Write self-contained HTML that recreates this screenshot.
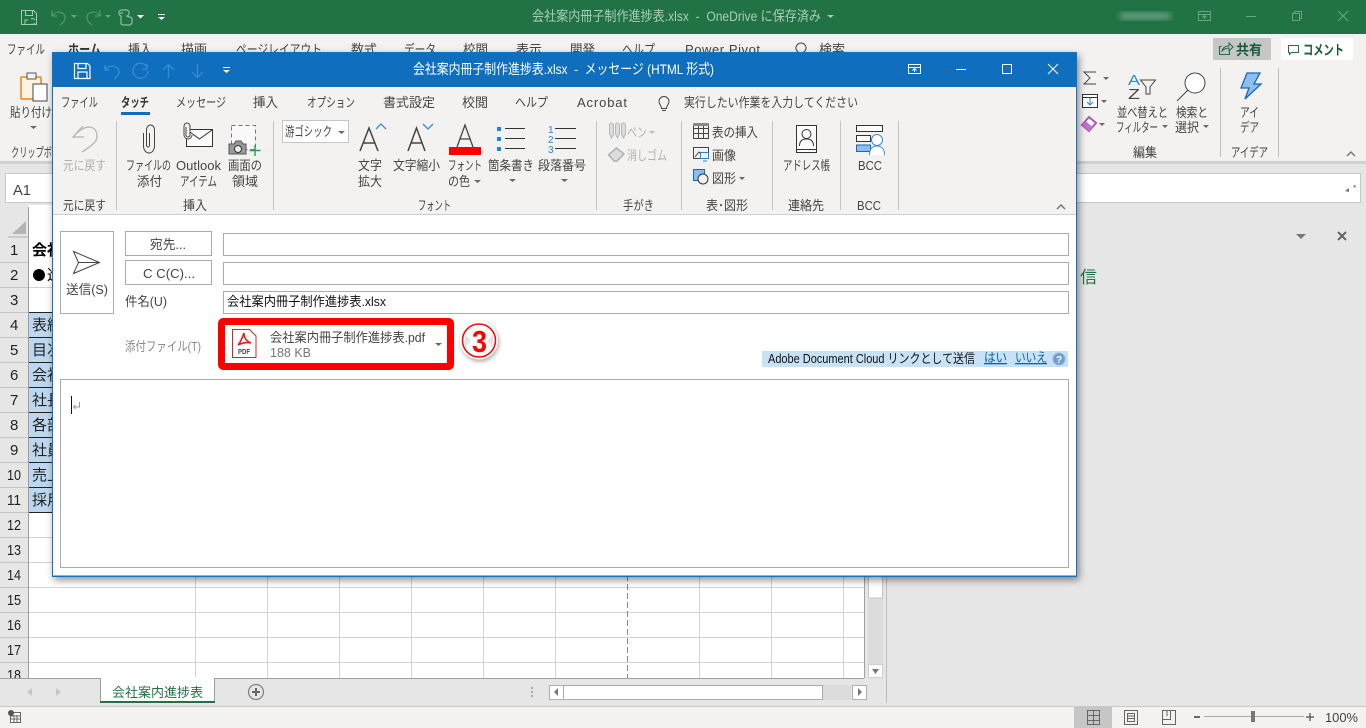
<!DOCTYPE html>
<html lang="ja"><head><meta charset="utf-8"><title>会社案内冊子制作進捗表</title>
<style>
html,body{margin:0;padding:0;width:1366px;height:728px;overflow:hidden;background:#e6e6e6}
svg{display:block}
text{font-family:"Liberation Sans","Noto Sans CJK JP",sans-serif;font-size:13px;fill:#444;white-space:pre}
.g{fill:#b0b0b0}.d{fill:#333}.n{font-size:15px;fill:#222}.c{font-size:15px;fill:#222}
.i{fill:none;stroke:#444;stroke-width:1}
</style></head><body>
<svg width="1366" height="728" viewBox="0 0 1366 728" xmlns="http://www.w3.org/2000/svg">
<defs>
<filter id="sh" x="-5%" y="-5%" width="110%" height="110%"><feDropShadow dx="2" dy="3" stdDeviation="4" flood-color="#000" flood-opacity=".45"/></filter>
<filter id="bl"><feGaussianBlur stdDeviation="3"/></filter>
<filter id="s2" x="-30%" y="-30%" width="160%" height="160%"><feDropShadow dx="1" dy="2" stdDeviation="2" flood-color="#000" flood-opacity=".35"/></filter>
</defs>
<!-- Excel chrome -->
<rect width="1366" height="728" fill="#e6e6e6"/>
<rect width="1366" height="34" fill="#217346"/>
<rect y="34" width="1366" height="127" fill="#f3f2f1"/>
<rect y="161" width="1366" height="3" fill="#d0d0d0"/>
<g fill="none" stroke="#a9c9b7" stroke-width="1">
<path d="M21.500 10.500h12l3 3v11h-15zM25.500 10.500v5h7v-5M25 24v-4h3M31 19a3 3 0 0 1 4 1M35 23a3 3 0 0 1-4 1"/>
<path d="M52 10v6h5M52 16c4-6 13-5 13 2 0 3-2 5-5 7" stroke="#5f9a7b"/>
<path d="M100 10v6h-5M100 16c-4-6-13-5-13 2 0 3 2 5 5 7" stroke="#5f9a7b"/>
<path d="M121 24v-8a2 2 0 0 1 2-6h2a2 2 0 0 1 2 6l5 2v5l-2 2h-7zM120 13h3"/>
</g>
<path d="M71 15h6l-3 3z" fill="#6ba386"/><path d="M105 15h6l-3 3z" fill="#6ba386"/>
<path d="M137 15h7l-3.500 3.500z" fill="#fff"/><path d="M158 14h7v1h-7zM158 17h7l-3.500 3z" fill="#fff"/>
<text x="532" y="21" textLength="289" lengthAdjust="spacingAndGlyphs" style="fill:#a9cbb8;font-size:14px">会社案内冊子制作進捗表.xlsx  -  OneDrive に保存済み</text>
<path d="M827 15h7l-3.500 3z" fill="#a9cbb8"/>
<rect x="1120" y="12" width="50" height="8" fill="#5f9a7b" filter="url(#bl)"/>
<g fill="none" stroke="#6ba386"><path d="M1198.500 11.500h12v9h-12zM1198.500 14.500h12M1204.500 19v-3M1202.500 17.500l2-2 2 2"/><path d="M1246 16.500h10"/><path d="M1292.500 13.500h7v7h-7zM1294.500 13.500v-2h7v7h-2"/><path d="M1338 11l10 10M1348 11l-10 10"/></g>
<text x="7" y="54" textLength="38" lengthAdjust="spacingAndGlyphs">ファイル</text>
<text x="68" y="54" textLength="33" lengthAdjust="spacingAndGlyphs" font-weight="700" class="d">ホーム</text>
<text x="128" y="54" textLength="24" lengthAdjust="spacingAndGlyphs">挿入</text>
<text x="181" y="54" textLength="26" lengthAdjust="spacingAndGlyphs">描画</text>
<text x="236" y="54" textLength="86" lengthAdjust="spacingAndGlyphs">ページレイアウト</text>
<text x="351" y="54" textLength="26" lengthAdjust="spacingAndGlyphs">数式</text>
<text x="404" y="54" textLength="32" lengthAdjust="spacingAndGlyphs">データ</text>
<text x="463" y="54" textLength="25" lengthAdjust="spacingAndGlyphs">校閲</text>
<text x="516" y="54" textLength="26" lengthAdjust="spacingAndGlyphs">表示</text>
<text x="570" y="54" textLength="25" lengthAdjust="spacingAndGlyphs">開発</text>
<text x="622" y="54" textLength="33" lengthAdjust="spacingAndGlyphs">ヘルプ</text>
<text x="685" y="54" textLength="75">Power Pivot</text>
<text x="819" y="54" textLength="26" lengthAdjust="spacingAndGlyphs">検索</text>
<circle cx="801" cy="48" r="5" class="i"/>
<!-- Share / comment -->
<rect x="1213" y="38" width="58" height="22" rx="1" fill="#c6c6c6"/>
<path d="M1221.500 46.500h-2v8h10v-3M1222 51c1-4 4-5 7-5v-3l4 4-4 4v-3c-3 0-5 1-7 3z" fill="none" stroke="#1e6b41"/>
<text x="1236" y="55" textLength="26" lengthAdjust="spacingAndGlyphs" font-weight="700" style="fill:#185c37;font-size:14px">共有</text>
<rect x="1281" y="38" width="72" height="22" rx="1" fill="#fff"/>
<path d="M1288.500 45.500h10v7h-7l-2 2v-2h-1z" fill="none" stroke="#217346"/>
<text x="1303" y="55" textLength="41" lengthAdjust="spacingAndGlyphs" font-weight="700" style="fill:#185c37;font-size:14px">コメント</text>
<!-- Excel ribbon left -->
<rect x="21" y="77" width="20" height="22" rx="1" fill="#fdf3e3" stroke="#f0a040" stroke-width="2"/>
<rect x="27" y="73" width="9" height="6" fill="#f3f2f1" stroke="#555"/>
<rect x="33" y="84" width="14" height="17" fill="#fff" stroke="#444"/>
<text x="10" y="117" textLength="42" lengthAdjust="spacingAndGlyphs">貼り付け</text>
<path d="M30 126h7l-3.500 3z" fill="#666"/>
<text x="11" y="157" textLength="41" lengthAdjust="spacingAndGlyphs">クリップボ</text>
<!-- Excel ribbon right -->
<path d="M1096 72h-12l6 6-6 6h12" fill="none" stroke="#444"/>
<path d="M1103 77h6l-3 3z" fill="#666"/>
<rect x="1082.500" y="94.500" width="15" height="13" fill="#fff" stroke="#333"/><path d="M1083 97.500h14" stroke="#333"/><path d="M1090 98v7M1087 102l3 3 3-3" fill="none" stroke="#1e88d8"/>
<path d="M1101 100h6l-3 3z" fill="#666"/>
<path d="M1082 125l7-8 7 6-7 8z" fill="#fff" stroke="#b352c0" stroke-width="2"/><path d="M1082 125l3.500-4 7 6-3.500 4z" fill="#c070cc"/>
<path d="M1099 123h6l-3 3z" fill="#666"/>
<text x="1128" y="85" textLength="12" lengthAdjust="spacingAndGlyphs" style="fill:#2a8fdc;font-size:15px">A</text>
<text x="1128" y="99" textLength="12" lengthAdjust="spacingAndGlyphs" style="fill:#444;font-size:15px">Z</text>
<path d="M1140.500 80h15l-5.500 7v7h-4v-7z" fill="none" stroke="#444"/>
<circle cx="1195" cy="83" r="10" fill="#fff" stroke="#444"/><path d="M1188 90l-11 11" stroke="#444"/>
<text x="1117" y="117" textLength="51" lengthAdjust="spacingAndGlyphs">並べ替えと</text>
<text x="1116" y="132" textLength="42" lengthAdjust="spacingAndGlyphs">フィルター</text>
<path d="M1162 125h6l-3 3z" fill="#666"/>
<text x="1176" y="117" textLength="32" lengthAdjust="spacingAndGlyphs">検索と</text>
<text x="1175" y="132" textLength="24" lengthAdjust="spacingAndGlyphs">選択</text>
<path d="M1203 125h6l-3 3z" fill="#666"/>
<text x="1133" y="157" textLength="24" lengthAdjust="spacingAndGlyphs">編集</text>
<rect x="1220" y="68" width="1" height="89" fill="#bdbdbd"/><rect x="1278" y="68" width="1" height="89" fill="#bdbdbd"/>
<path d="M1247 73h13l-6 11h7l-16 15 4-11h-8z" fill="#8dbdec" stroke="#1469b8" stroke-width="1.300"/>
<text x="1240" y="117" textLength="19" lengthAdjust="spacingAndGlyphs">アイ</text>
<text x="1240" y="132" textLength="19" lengthAdjust="spacingAndGlyphs">デア</text>
<text x="1231" y="157" textLength="37" lengthAdjust="spacingAndGlyphs">アイデア</text>
<path d="M1347 156l4-4 4 4" fill="none" stroke="#777" stroke-width="1.500"/>
<!-- Formula bar -->
<rect x="5.500" y="173.500" width="1355" height="29" fill="#fff" stroke="#c8c8c8"/>
<text x="13" y="195" textLength="18" lengthAdjust="spacingAndGlyphs" style="font-size:15px">A1</text>
<path d="M1345 191l4-3v4zM1356 185l-3 1 2 2z" fill="#777"/>
<!-- Grid -->
<rect x="0" y="205" width="886" height="473" fill="#fff"/>
<rect x="0" y="205" width="28" height="473" fill="#e6e6e6"/>
<path d="M26 221v13h-14z" fill="#b4b4b4"/>
<path d="M8 237h20" stroke="#b0b0b0"/>
<g fill="#bdd7ee"><rect x="29" y="312" width="30" height="200"/></g>
<g stroke="#d4d4d4" stroke-width="1">
<path d="M29 287.500h30M29 512.500h838M29 537.500h838M29 562.500h838M29 587.500h838M29 612.500h838M29 637.500h838M29 662.500h838"/>
<path d="M195.500 512v166M267.500 512v166M339.500 512v166M411.500 512v166M483.500 512v166M555.500 512v166M699.500 512v166M771.500 512v166M843.500 512v166"/>
</g>
<path d="M627.500 512v166" stroke="#888" stroke-dasharray="6 3"/>
<path d="M29 312.500h30M29 337.500h30M29 362.500h30M29 387.500h30M29 412.500h30M29 437.500h30M29 462.500h30M29 487.500h30M29 512.500h30" stroke="#222"/>
<path d="M0 262.500h28M0 287.500h28M0 312.500h28M0 337.500h28M0 362.500h28M0 387.500h28M0 412.500h28M0 437.500h28M0 462.500h28M0 487.500h28M0 512.500h28M0 537.500h28M0 562.500h28M0 587.500h28M0 612.500h28M0 637.500h28M0 662.500h28" stroke="#c4c4c4"/>
<rect x="28" y="207" width="1" height="471" fill="#9e9e9e"/>
<g class="n">
<text class="n" x="10" y="255">1</text><text class="n" x="10" y="280">2</text><text class="n" x="10" y="305">3</text><text class="n" x="10" y="330">4</text><text class="n" x="10" y="355">5</text><text class="n" x="10" y="380">6</text><text class="n" x="10" y="405">7</text><text class="n" x="10" y="430">8</text><text class="n" x="10" y="455">9</text>
<text class="n" x="7" y="480" textLength="14" lengthAdjust="spacingAndGlyphs">10</text><text class="n" x="7" y="505" textLength="14" lengthAdjust="spacingAndGlyphs">11</text><text class="n" x="7" y="530" textLength="14" lengthAdjust="spacingAndGlyphs">12</text><text class="n" x="7" y="555" textLength="14" lengthAdjust="spacingAndGlyphs">13</text><text class="n" x="7" y="580" textLength="14" lengthAdjust="spacingAndGlyphs">14</text><text class="n" x="7" y="605" textLength="14" lengthAdjust="spacingAndGlyphs">15</text><text class="n" x="7" y="630" textLength="14" lengthAdjust="spacingAndGlyphs">16</text><text class="n" x="7" y="655" textLength="14" lengthAdjust="spacingAndGlyphs">17</text><text class="n" x="7" y="680" textLength="14" lengthAdjust="spacingAndGlyphs">18</text>
</g>
<text class="c" x="32" y="255" font-weight="700" style="fill:#000">会社</text>
<circle cx="39" cy="275" r="6" fill="#000"/>
<text class="c" x="47" y="280" style="fill:#000">進</text>
<text class="c" x="32" y="330">表紙</text><text class="c" x="32" y="355">目次</text><text class="c" x="32" y="380">会社</text><text class="c" x="32" y="405">社長</text><text class="c" x="32" y="430">各部</text><text class="c" x="32" y="455">社員</text><text class="c" x="32" y="480">売上</text><text class="c" x="32" y="505">採用</text>
<!-- Scrollbars -->
<rect x="864" y="207" width="22" height="471" fill="#e6e6e6"/><rect x="864" y="512" width="1" height="166" fill="#a0a0a0"/>
<rect x="868" y="560" width="15" height="118" fill="#dcdcdc"/>
<rect x="868.500" y="570" width="14" height="28" fill="#fff" stroke="#c4c4c4"/>
<rect x="868.500" y="664.500" width="14" height="13" fill="#fff" stroke="#d0d0d0"/><path d="M872 669h7l-3.500 5z" fill="#777"/>
<rect x="886" y="205" width="1" height="498" fill="#bdbdbd"/>
<rect x="0" y="678" width="886" height="28" fill="#e6e6e6"/>
<rect x="0" y="678" width="864" height="1" fill="#a0a0a0"/>
<!-- Sheet tab -->
<path d="M100.500 678.500V702h114V678.500" fill="#fff" stroke="#a0a0a0"/><rect x="101" y="677" width="113" height="3" fill="#fff"/>
<rect x="100" y="701" width="115" height="2" fill="#217346"/>
<text x="112" y="697" textLength="91" lengthAdjust="spacingAndGlyphs" style="fill:#217346;font-size:13px">会社案内進捗表</text>
<path d="M32 688v8l-5-4zM56 688v8l5-4z" fill="#c4c4c4"/>
<circle cx="256" cy="692" r="7.500" fill="none" stroke="#808080" stroke-width="1.200"/><path d="M252 692h8M256 688v8" stroke="#666" stroke-width="2"/>
<rect x="531" y="687" width="2" height="2" fill="#aaa"/><rect x="531" y="691" width="2" height="2" fill="#aaa"/><rect x="531" y="695" width="2" height="2" fill="#aaa"/>
<rect x="549" y="685" width="302" height="15" fill="#dcdcdc"/>
<rect x="549.500" y="685.500" width="14" height="14" fill="#fff" stroke="#b0b0b0"/><path d="M558 688v8l-4-4z" fill="#777"/>
<rect x="563.500" y="685.500" width="259" height="14" fill="#fff" stroke="#aaa"/>
<rect x="852.500" y="685.500" width="14" height="14" fill="#fff" stroke="#b0b0b0"/><path d="M858 688v8l4-4z" fill="#777"/>
<!-- Right pane -->
<path d="M1296 234h10l-5 5z" fill="#777"/>
<path d="M1338 232l8 8M1346 232l-8 8" stroke="#666" stroke-width="2"/>
<text x="1080" y="283" style="fill:#217346;font-size:17px">信</text>
<!-- Status bar -->
<rect x="0" y="706" width="1366" height="22" fill="#f3f2f1"/><rect x="0" y="706" width="1366" height="1" fill="#c8c8c8"/>
<path d="M10.500 712.500h10v10h-10z" fill="#fff" stroke="#666"/><path d="M10 716h11M10 719h11M14 715v8M17 715v8" stroke="#666"/>
<circle cx="11" cy="713" r="3" fill="#555"/>
<rect x="1074" y="707" width="38" height="21" fill="#c6c6c6"/>
<path d="M1087.500 710.500h12v14h-12zM1087.500 715.500h12M1087.500 720.500h12M1093.500 710v15" fill="none" stroke="#666"/>
<path d="M1124.500 710.500h13v14h-13z" fill="none" stroke="#666"/><path d="M1127.500 713.500h7v8h-7zM1128 716h6M1128 718.500h6" fill="none" stroke="#666"/>
<path d="M1162.500 710.500h13v14h-13zM1162.500 719.500h8v-9M1167 711v5" fill="none" stroke="#666"/>
<rect x="1194" y="716" width="6" height="2" fill="#666"/>
<rect x="1204" y="716" width="100" height="1" fill="#aaa"/>
<rect x="1251" y="711" width="4" height="11" fill="#777"/>
<path d="M1306 717h8M1310 713v8" stroke="#666" stroke-width="1.500"/>
<text x="1325" y="722" textLength="33" lengthAdjust="spacingAndGlyphs">100%</text>

<!-- Dialog -->
<rect x="52" y="52" width="1025" height="525" fill="#fff" filter="url(#sh)"/>
<rect x="52" y="52" width="1025" height="35" fill="#106ebe"/>
<rect x="53" y="87" width="1023" height="127" fill="#f3f2f1"/>
<rect x="53" y="214" width="1023" height="1" fill="#d2d0ce"/>
<rect x="52.500" y="52.500" width="1024" height="524" fill="none" stroke="#1272c4" stroke-width="1"/>
<rect x="53" y="575.500" width="1023" height="1" fill="#1272c4"/>
<!-- title bar icons -->
<g fill="none" stroke="#fff" stroke-width="1.200"><path d="M74.500 63.500h13l2.500 2.500v12.500h-15.500zM78 63.500v5h8v-5M78 78v-6h9v6"/></g>
<g fill="none" stroke="#3b8bd4" stroke-width="1.300">
<path d="M105 65v5h5M105 70c3-6 14-5 14 2 0 3-2 5-5 7"/>
<path d="M147 64v5h-5M147 67a7.500 7.500 0 1 0 1 4"/>
<path d="M168.500 78V65M163 70l5.500-5.500 5.500 5.500"/>
<path d="M197.500 64v13M192 72l5.500 5.500 5.500-5.500"/>
</g>
<path d="M223 67h7v1h-7zM223 70h7l-3.500 3z" fill="#fff"/>
<text x="413" y="74" textLength="301" lengthAdjust="spacingAndGlyphs" style="fill:#fff;font-size:14px">会社案内冊子制作進捗表.xlsx  -  メッセージ (HTML 形式)</text>
<g fill="none" stroke="#fff"><path d="M908.500 64.500h12v9h-12zM908.500 67.500h12M914.500 72v-3M912.500 70.500l2-2 2 2"/><path d="M956 69.500h10"/><path d="M1002.500 64.500h9v9h-9z"/><path d="M1048 64l10 10M1058 64l-10 10"/></g>
<!-- tabs -->
<text x="61" y="107" textLength="37" lengthAdjust="spacingAndGlyphs">ファイル</text>
<text x="121" y="107" textLength="28" lengthAdjust="spacingAndGlyphs" font-weight="700" class="d">タッチ</text>
<rect x="121" y="112" width="29" height="3" fill="#106ebe"/>
<text x="176" y="107" textLength="50" lengthAdjust="spacingAndGlyphs">メッセージ</text>
<text x="253" y="107" textLength="25" lengthAdjust="spacingAndGlyphs">挿入</text>
<text x="307" y="107" textLength="48" lengthAdjust="spacingAndGlyphs">オプション</text>
<text x="383" y="107" textLength="52" lengthAdjust="spacingAndGlyphs">書式設定</text>
<text x="462" y="107" textLength="26" lengthAdjust="spacingAndGlyphs">校閲</text>
<text x="515" y="107" textLength="33" lengthAdjust="spacingAndGlyphs">ヘルプ</text>
<text x="577" y="107" textLength="50">Acrobat</text>
<path d="M661.500 108.500c0-3-2.500-4-2.500-7a5 5 0 0 1 10 0c0 3-2.500 4-2.500 7zM662 110.500h4" fill="none" stroke="#444"/>
<text x="684" y="107" textLength="174" lengthAdjust="spacingAndGlyphs">実行したい作業を入力してください</text>
<!-- separators -->
<g fill="#c4c4c4"><rect x="116" y="121" width="1" height="89"/><rect x="273" y="121" width="1" height="89"/><rect x="596" y="121" width="1" height="89"/><rect x="681" y="121" width="1" height="89"/><rect x="772" y="121" width="1" height="89"/><rect x="840" y="121" width="1" height="89"/><rect x="898" y="121" width="1" height="89"/></g>
<!-- undo -->
<path d="M83 126l-10 11h11M77 133c8-8 20-9 20 4 0 5-7 10-15 15" fill="none" stroke="#b4b4b4" stroke-width="1.300"/>
<text x="63" y="170" textLength="43" lengthAdjust="spacingAndGlyphs" class="g">元に戻す</text>
<text x="63" y="210" textLength="43" lengthAdjust="spacingAndGlyphs">元に戻す</text>
<!-- attach -->
<path d="M143.500 133v13a5.500 7 0 0 0 11 0v-16a4 5 0 0 0-8 0v15a1.500 2 0 0 0 3 0v-12" fill="none" stroke="#444"/>
<text x="126" y="170" textLength="45" lengthAdjust="spacingAndGlyphs">ファイルの</text>
<text x="137" y="186" textLength="25" lengthAdjust="spacingAndGlyphs">添付</text>
<!-- outlook item -->
<path d="M186.500 129.500h26v17h-26z" fill="#fbfbfb" stroke="#333"/><path d="M187 130l12.500 9 12.500-9" fill="none" stroke="#333"/>
<path d="M186 127v8a2 2 0 0 0 4 0v-9a3 3 0 0 0-6 0v9a4 4 0 0 0 8 0" fill="#f3f2f1" stroke="#444"/>
<text x="176" y="170" textLength="45">Outlook</text>
<text x="180" y="186" textLength="37" lengthAdjust="spacingAndGlyphs">アイテム</text>
<!-- screenshot -->
<rect x="231.500" y="125.500" width="24" height="24" fill="#f9f9f9" stroke="#777" stroke-dasharray="4 3"/>
<path d="M229 144h5l2-3h5l2 3h3v10h-17z" fill="#999" stroke="#555"/><circle cx="238" cy="149" r="3.500" fill="#eee" stroke="#333"/>
<path d="M255 145v11M249.500 150.500h11" stroke="#1ea04c" stroke-width="1.400"/>
<text x="228" y="170" textLength="34" lengthAdjust="spacingAndGlyphs">画面の</text>
<text x="232" y="186" textLength="26" lengthAdjust="spacingAndGlyphs">領域</text>
<text x="183" y="210" textLength="24" lengthAdjust="spacingAndGlyphs">挿入</text>
<!-- font dropdown -->
<rect x="282.500" y="120.500" width="66" height="22" fill="#fff" stroke="#c8c6c4"/>
<text x="285" y="136" textLength="47" lengthAdjust="spacingAndGlyphs">游ゴシック</text>
<path d="M338 131h7l-3.500 3z" fill="#666"/>
<!-- A icons -->
<path d="M360 151l9-23 9 23M363 143h12" fill="none" stroke="#444" stroke-width="1.500"/>
<path d="M376 129l5-5 5 5" fill="none" stroke="#2a8fdc" stroke-width="1.300"/>
<text x="358" y="170" textLength="24" lengthAdjust="spacingAndGlyphs">文字</text>
<text x="358" y="186" textLength="24" lengthAdjust="spacingAndGlyphs">拡大</text>
<path d="M408 151l8.500-23 8.500 23M411 143h11" fill="none" stroke="#444" stroke-width="1.500"/>
<path d="M423 124l5 5 5-5" fill="none" stroke="#2a8fdc" stroke-width="1.300"/>
<text x="393" y="170" textLength="47" lengthAdjust="spacingAndGlyphs">文字縮小</text>
<path d="M457 147l8-22 8 22M460 139h10" fill="none" stroke="#444" stroke-width="1.300"/>
<rect x="449" y="147" width="32" height="8" fill="#f00"/>
<text x="448" y="170" textLength="34" lengthAdjust="spacingAndGlyphs">フォント</text>
<text x="448" y="186" textLength="22" lengthAdjust="spacingAndGlyphs">の色</text>
<path d="M474 180h7l-3.500 3z" fill="#666"/>
<!-- lists -->
<g fill="#1e88d8"><rect x="497" y="127" width="4" height="4"/><rect x="497" y="137" width="4" height="4"/><rect x="497" y="147" width="4" height="4"/></g>
<path d="M505 128.500h20M505 138.500h20M505 148.500h20" stroke="#333"/>
<text x="488" y="170" textLength="46" lengthAdjust="spacingAndGlyphs">箇条書き</text>
<path d="M509 179h7l-3.500 3z" fill="#666"/>
<text x="548" y="133" style="fill:#1e88d8;font-size:10px">1</text><text x="548" y="143" style="fill:#1e88d8;font-size:10px">2</text><text x="548" y="153" style="fill:#1e88d8;font-size:10px">3</text>
<path d="M555 128.500h21M555 138.500h21M555 148.500h21" stroke="#333"/>
<text x="538" y="170" textLength="48" lengthAdjust="spacingAndGlyphs">段落番号</text>
<path d="M561 179h7l-3.500 3z" fill="#666"/>
<text x="418" y="210" textLength="33" lengthAdjust="spacingAndGlyphs">フォント</text>
<!-- pen -->
<g fill="#dcdcdc" stroke="#b8b8b8"><path d="M609.500 125a2 2 0 0 1 4 0v9l-2 4-2-4zM615.500 125a2 2 0 0 1 4 0v9l-2 4-2-4zM621.500 125a2 2 0 0 1 4 0v9l-2 4-2-4z"/></g>
<text x="627" y="137" textLength="20" lengthAdjust="spacingAndGlyphs" class="g">ペン</text>
<path d="M649 131h6l-3 3z" fill="#bbb"/>
<path d="M608.500 155l8-7 7.500 6-7 7h-3z" fill="#ddd" stroke="#b0b0b0" stroke-width="1.500"/>
<text x="627" y="160" textLength="40" lengthAdjust="spacingAndGlyphs" class="g">消しゴム</text>
<text x="623" y="210" textLength="31" lengthAdjust="spacingAndGlyphs">手がき</text>
<!-- table/image/shape -->
<path d="M693.500 123.500h15v15h-15zM693.500 128.500h15M693.500 133.500h15M698.500 126v12M703.500 126v12" fill="none" stroke="#444"/><rect x="693" y="123" width="16" height="3" fill="#888"/>
<text x="712" y="137" textLength="46" lengthAdjust="spacingAndGlyphs">表の挿入</text>
<path d="M693.500 147.500h15v11h-15zM695 157l4-5 3 3" fill="none" stroke="#444"/><rect x="700.500" y="152.500" width="8" height="6" fill="#f3f2f1" stroke="#1e88d8"/><path d="M703 161h4" stroke="#1e88d8"/>
<text x="712" y="160" textLength="24" lengthAdjust="spacingAndGlyphs">画像</text>
<rect x="693.500" y="169.500" width="11" height="11" fill="#8dbdec" stroke="#1469b8"/><circle cx="703" cy="179" r="5" fill="#f3f2f1" stroke="#333"/>
<text x="712" y="183" textLength="24" lengthAdjust="spacingAndGlyphs">図形</text>
<path d="M739 177h6l-3 3z" fill="#666"/>
<text x="706" y="210" textLength="42" lengthAdjust="spacingAndGlyphs">表･図形</text>
<!-- address -->
<path d="M796.500 125.500h20v27h-20zM796.500 149.500h20" fill="#fbfbfb" stroke="#333"/>
<circle cx="806.500" cy="134" r="4.500" fill="none" stroke="#333"/><path d="M799.500 146c0-5 3-7 7-7s7 2 7 7" fill="none" stroke="#333"/>
<text x="783" y="170" textLength="47" lengthAdjust="spacingAndGlyphs">アドレス帳</text>
<text x="788" y="210" textLength="36" lengthAdjust="spacingAndGlyphs">連絡先</text>
<!-- bcc -->
<rect x="856.500" y="125.500" width="26" height="6" fill="#fff" stroke="#333"/>
<rect x="856.500" y="135.500" width="14" height="6" fill="#fff" stroke="#333"/>
<rect x="856.500" y="145" width="14" height="6.500" fill="#8dbdec" stroke="#1469b8"/>
<circle cx="877" cy="140" r="5.500" fill="#fff" stroke="#2a8fdc"/><path d="M869.500 155c0-6 3-9 7.500-9s7.500 3 7.500 9" fill="#fff" stroke="#2a8fdc"/>
<text x="858" y="170" textLength="24" lengthAdjust="spacingAndGlyphs">BCC</text>
<text x="857" y="210" textLength="24" lengthAdjust="spacingAndGlyphs">BCC</text>
<path d="M1057 209l4-4 4 4" fill="none" stroke="#777" stroke-width="1.500"/>
<!-- compose -->
<rect x="60.500" y="231.500" width="53" height="82" fill="#fff" stroke="#ababab"/>
<path d="M73.500 251.500l26 11-26 11 5-11z" fill="none" stroke="#444"/><path d="M78.500 262.500h21" stroke="#444"/>
<text x="66" y="294" textLength="42" lengthAdjust="spacingAndGlyphs">送信(S)</text>
<rect x="125.500" y="231.500" width="86" height="24" fill="#fff" stroke="#ababab"/>
<text x="150" y="249" textLength="36" lengthAdjust="spacingAndGlyphs">宛先...</text>
<rect x="125.500" y="260.500" width="86" height="24" fill="#fff" stroke="#ababab"/>
<text x="143" y="278" textLength="52" lengthAdjust="spacingAndGlyphs">C C(C)...</text>
<rect x="223.500" y="233.500" width="845" height="22" fill="#fff" stroke="#ababab"/>
<rect x="223.500" y="262.500" width="845" height="22" fill="#fff" stroke="#ababab"/>
<rect x="223.500" y="291.500" width="845" height="22" fill="#fff" stroke="#ababab"/>
<text x="125" y="306" textLength="42" lengthAdjust="spacingAndGlyphs">件名(U)</text>
<text x="227" y="306" textLength="159" lengthAdjust="spacingAndGlyphs" style="fill:#111">会社案内冊子制作進捗表.xlsx</text>
<text x="125" y="351" textLength="76" lengthAdjust="spacingAndGlyphs" style="fill:#8a8a8a">添付ファイル(T)</text>
<!-- attachment -->
<rect x="221.500" y="321.500" width="229" height="45" rx="2" fill="#fff" stroke="#f00" stroke-width="7"/>
<path d="M232.500 329.500h17l6.500 6.500v21.500h-23.500z" fill="#fff" stroke="#e02020"/>
<path d="M244 333c-2 5-3 9-6 12M244 333c0 5 2 8 7 10-4-1-9 0-13 2" fill="none" stroke="#e02020" stroke-width="1.600"/>
<text x="238" y="354" textLength="12" lengthAdjust="spacingAndGlyphs" font-weight="700" style="font-size:7px;fill:#444">PDF</text>
<text x="270" y="342" textLength="155" lengthAdjust="spacingAndGlyphs">会社案内冊子制作進捗表.pdf</text>
<text x="270" y="357" textLength="41" lengthAdjust="spacingAndGlyphs" style="fill:#777">188 KB</text>
<path d="M435 343h7l-3.500 3z" fill="#666"/>
<circle cx="479" cy="340.500" r="19" fill="#fff" filter="url(#s2)"/>
<circle cx="479" cy="340.500" r="16.500" fill="#fff" stroke="#f00" stroke-width="1.500"/>
<path d="M465 334l6 7-6 7zM493 334l-6 7 6 7z" fill="#e4e4e4"/>
<text x="472" y="352" textLength="15" lengthAdjust="spacingAndGlyphs" font-weight="700" style="fill:#f00;font-size:31px">3</text>
<!-- adobe bar -->
<rect x="762" y="351" width="306" height="16" fill="#c7e2f6"/>
<text x="768" y="363" textLength="207" lengthAdjust="spacingAndGlyphs" style="fill:#111">Adobe Document Cloud リンクとして送信</text>
<text x="984" y="362" textLength="23" lengthAdjust="spacingAndGlyphs" style="fill:#0b62b0;text-decoration:underline">はい</text>
<text x="1015" y="362" textLength="32" lengthAdjust="spacingAndGlyphs" style="fill:#0b62b0;text-decoration:underline">いいえ</text>
<circle cx="1059" cy="359" r="6" fill="#6d9fd6" stroke="#8fb5df"/>
<text x="1056" y="363" font-weight="700" style="fill:#fff;font-size:10px">?</text>
<!-- body -->
<rect x="60.500" y="379.500" width="1008" height="188" fill="#fff" stroke="#ababab"/>
<rect x="71" y="396" width="1" height="18" fill="#111"/>
<path d="M79.500 402v5h-6M75.500 405l-2 2 2 2" fill="none" stroke="#999"/>
</svg>
</body></html>
